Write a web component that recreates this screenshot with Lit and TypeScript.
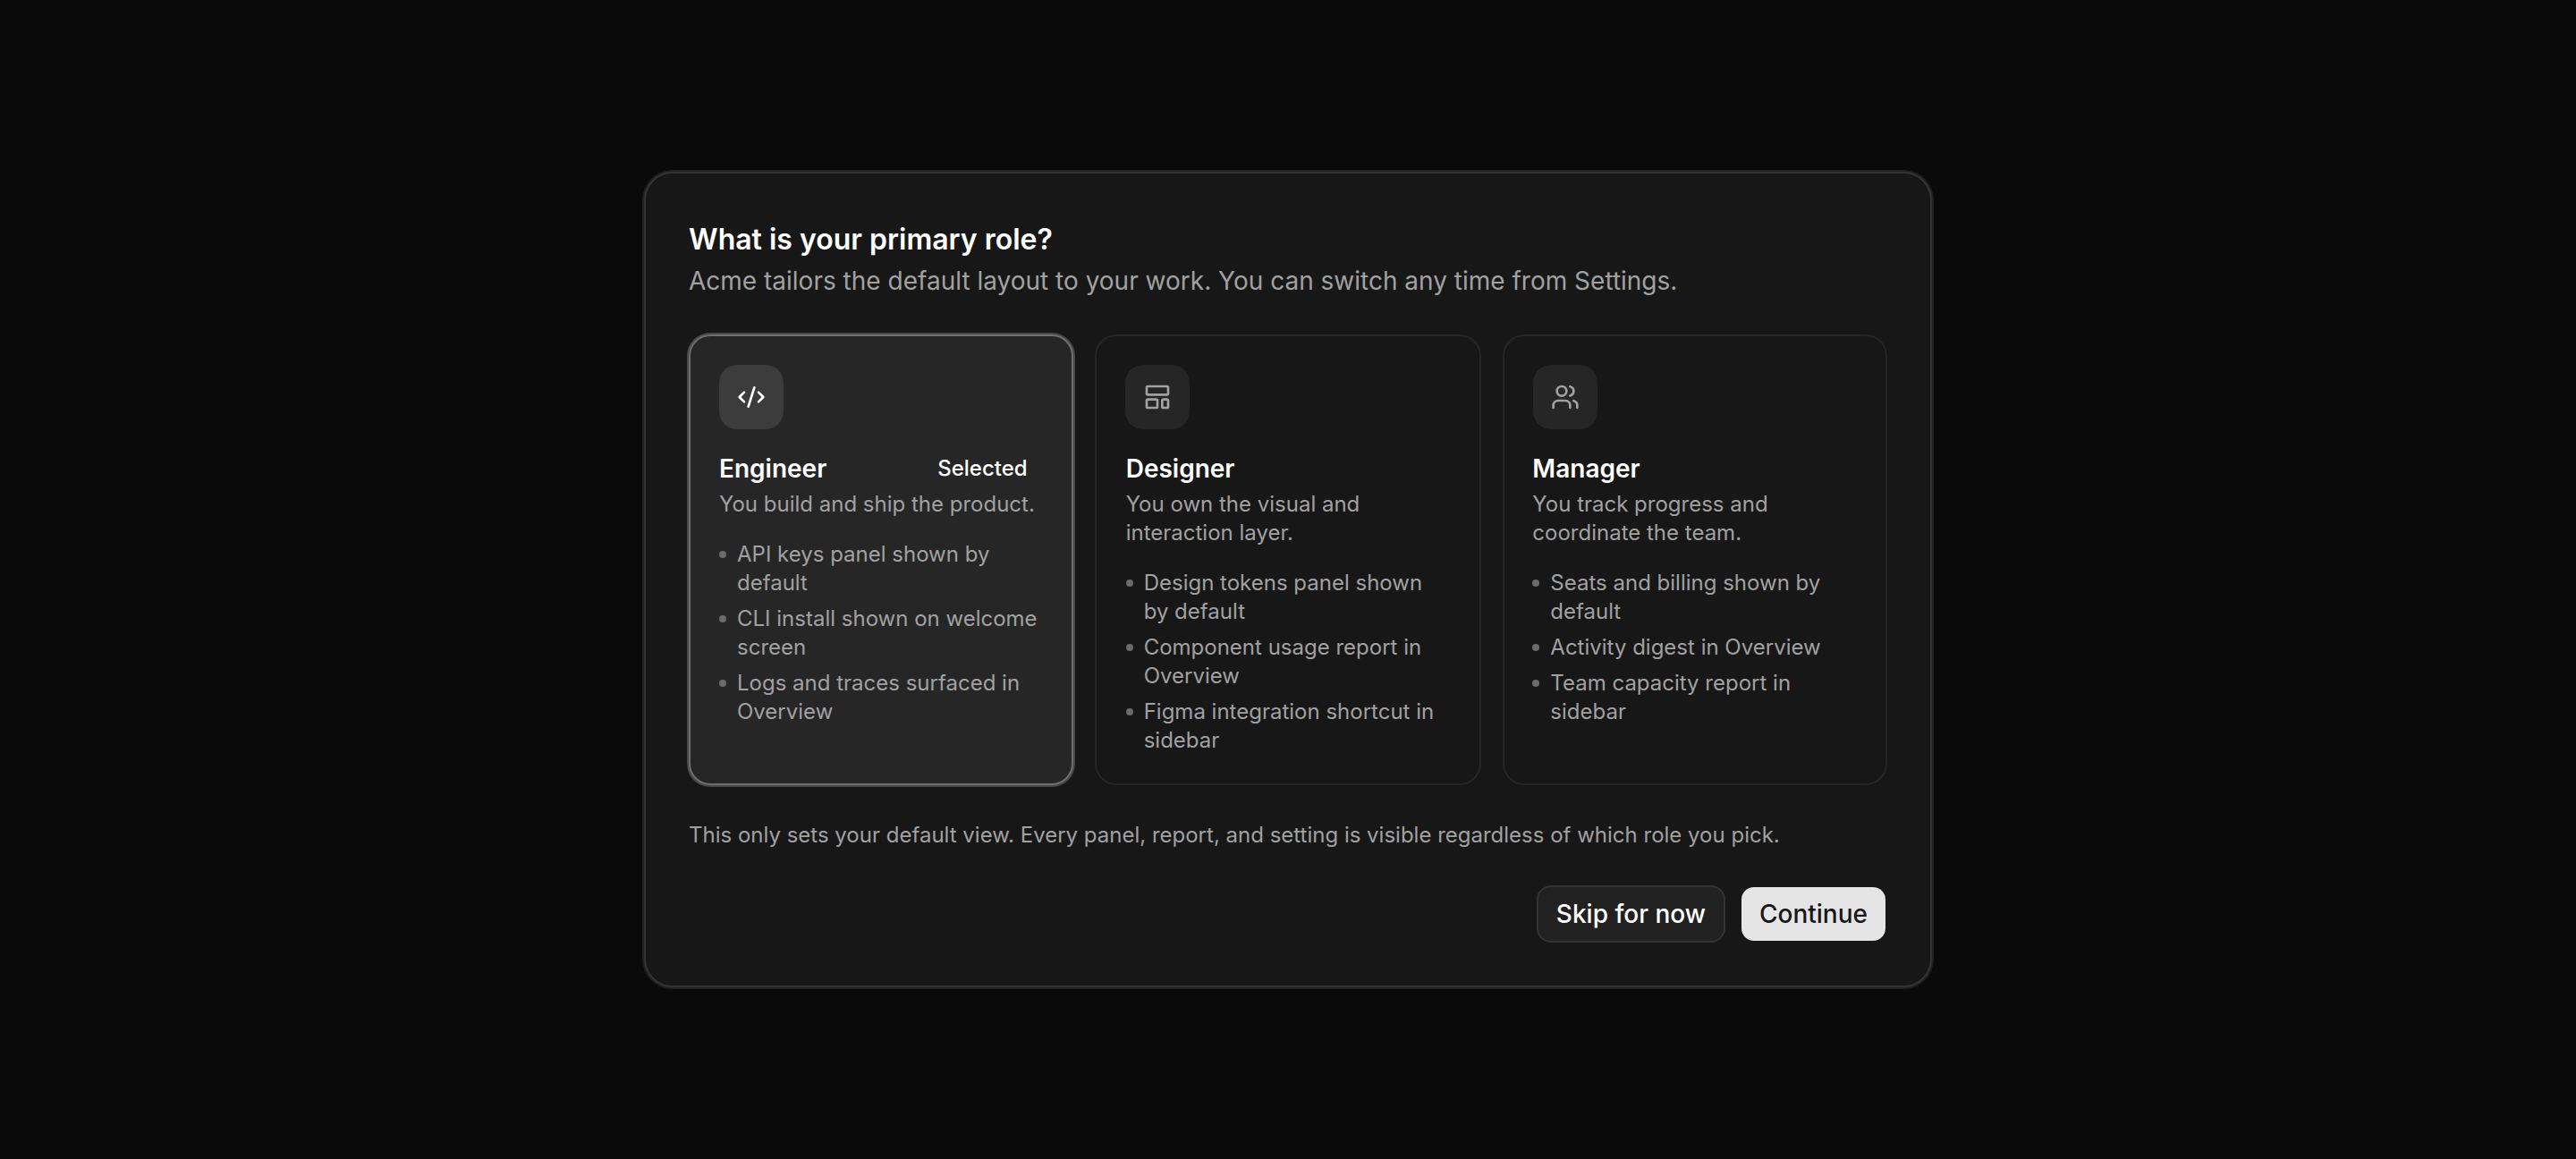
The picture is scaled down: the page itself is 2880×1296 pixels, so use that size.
import { css, html, LitElement } from "lit";
import { customElement } from "lit/decorators.js";

const codeIcon = html`<svg viewBox="0 0 24 24"><path d="m18 16 4-4-4-4" /><path d="m6 8-4 4 4 4" /><path d="m14.5 4-5 16" /></svg>`;
const layoutIcon = html`<svg viewBox="0 0 24 24"><rect x="3" y="3" width="18" height="7" rx="1" /><rect x="3" y="14" width="9" height="7" rx="1" /><rect x="16" y="14" width="5" height="7" rx="1" /></svg>`;
const usersIcon = html`<svg viewBox="0 0 24 24"><path d="M16 21v-2a4 4 0 0 0-4-4H6a4 4 0 0 0-4 4v2" /><circle cx="9" cy="7" r="4" /><path d="M16 3.128a4 4 0 0 1 0 7.744" /><path d="M22 21v-2a4 4 0 0 0-3-3.87" /></svg>`;

const roles = [
    {
        name: "Engineer",
        icon: codeIcon,
        selected: true,
        desc: "You build and ship the product.",
        items: ["API keys panel shown by default", "CLI install shown on welcome screen", "Logs and traces surfaced in Overview"],
    },
    {
        name: "Designer",
        icon: layoutIcon,
        selected: false,
        desc: "You own the visual and interaction layer.",
        items: ["Design tokens panel shown by default", "Component usage report in Overview", "Figma integration shortcut in sidebar"],
    },
    {
        name: "Manager",
        icon: usersIcon,
        selected: false,
        desc: "You track progress and coordinate the team.",
        items: ["Seats and billing shown by default", "Activity digest in Overview", "Team capacity report in sidebar"],
    },
];

@customElement("app-root")
export class AppRoot extends LitElement {

    static styles = css`
        :host {
            display: block;
            zoom: 2;
            height: 648px;
            background: #0a0a0a;
            font-family: Inter, "Liberation Sans", sans-serif;
        }

        .page {
            height: 648px;
            display: flex;
            align-items: center;
            justify-content: center;
        }

        .modal {
            box-sizing: border-box;
            width: 720px;
            padding: 24px;
            background: #171717;
            border: 1px solid #333333;
            border-radius: 16px;
            box-shadow: 0 0 0 1px #212121;
        }

        h1 {
            margin: 0;
            font-size: 16px;
            line-height: 26px;
            font-weight: 600;
            color: #ffffff;
        }

        .sub {
            margin: 0;
            font-size: 14px;
            line-height: 20px;
            color: #a1a1a1;
        }

        .cards {
            display: grid;
            grid-template-columns: 215px 216px 215px;
            gap: 12px;
            margin-top: 20px;
        }

        .card {
            box-sizing: border-box;
            padding: 16px;
            border: 1px solid #262626;
            border-radius: 12px;
            background: #171717;
        }

        .card.selected {
            background: #262626;
            border-color: #6e6e6e;
            box-shadow: 0 0 0 1px #474747;
        }

        /* boxes sit on whole px, the text keeps the fractional column offset */
        .card:nth-child(1) .text {
            margin-right: -0.33px;
        }

        .card:nth-child(2) .text {
            margin-left: 0.33px;
        }

        .card:nth-child(3) .text {
            margin-left: -0.33px;
        }

        .icon {
            width: 36px;
            height: 36px;
            display: flex;
            align-items: center;
            justify-content: center;
            border-radius: 10px;
            background: #262626;
            color: #a1a1a1;
        }

        .selected .icon {
            background: #3c3c3c;
            color: #ffffff;
        }

        svg {
            width: 16px;
            height: 16px;
            fill: none;
            stroke: currentColor;
            stroke-width: 2;
            stroke-linecap: round;
            stroke-linejoin: round;
        }

        .head {
            display: flex;
            align-items: center;
            justify-content: space-between;
            margin-top: 12px;
        }

        .name {
            font-size: 14px;
            line-height: 20px;
            font-weight: 600;
            color: #ffffff;
        }

        .badge {
            padding: 0 8px;
            border: 1px solid transparent;
            font-size: 12px;
            line-height: 16px;
            font-weight: 500;
            color: #ffffff;
        }

        .desc {
            margin: 2px 0 0;
            font-size: 12px;
            line-height: 16px;
            color: #a1a1a1;
        }

        ul {
            list-style: none;
            margin: 12px 0 0;
            padding: 0;
            display: flex;
            flex-direction: column;
            gap: 4px;
        }

        li {
            position: relative;
            padding-left: 10px;
            font-size: 12px;
            line-height: 16px;
            color: #a1a1a1;
        }

        li::before {
            content: "";
            position: absolute;
            left: 0;
            top: 6px;
            width: 4px;
            height: 4px;
            border-radius: 50%;
            background: #6b6b6b;
        }

        .note {
            margin: 20px 0 0;
            font-size: 12px;
            line-height: 16px;
            color: #a1a1a1;
        }

        .actions {
            display: flex;
            justify-content: flex-end;
            align-items: center;
            gap: 8px;
            margin-top: 20px;
        }

        button {
            height: 32px;
            padding: 0 10px;
            border-radius: 8px;
            border: 1px solid transparent;
            background-clip: padding-box;
            font: 500 14px Inter, "Liberation Sans", sans-serif;
        }

        .ghost {
            background: #212121;
            border-color: #333333;
            background-clip: border-box;
            color: #ffffff;
        }

        .primary {
            background-color: #e5e5e5;
            color: #171717;
        }
    `;

    protected render() {
        return html`
            <div class="page">
                <div class="modal">
                    <h1>What is your primary role?</h1>
                    <p class="sub">Acme tailors the default layout to your work. You can switch any time from Settings.</p>
                    <div class="cards">
                        ${roles.map((r) => html`
                            <div class="card ${r.selected ? "selected" : ""}">
                                <div class="icon">${r.icon}</div>
                                <div class="text">
                                    <div class="head">
                                        <span class="name">${r.name}</span>
                                        ${r.selected ? html`<span class="badge">Selected</span>` : ""}
                                    </div>
                                    <p class="desc">${r.desc}</p>
                                    <ul>${r.items.map((i) => html`<li>${i}</li>`)}</ul>
                                </div>
                            </div>
                        `)}
                    </div>
                    <p class="note">This only sets your default view. Every panel, report, and setting is visible regardless of which role you pick.</p>
                    <div class="actions">
                        <button class="ghost">Skip for now</button>
                        <button class="primary">Continue</button>
                    </div>
                </div>
            </div>
        `;
    }
}
